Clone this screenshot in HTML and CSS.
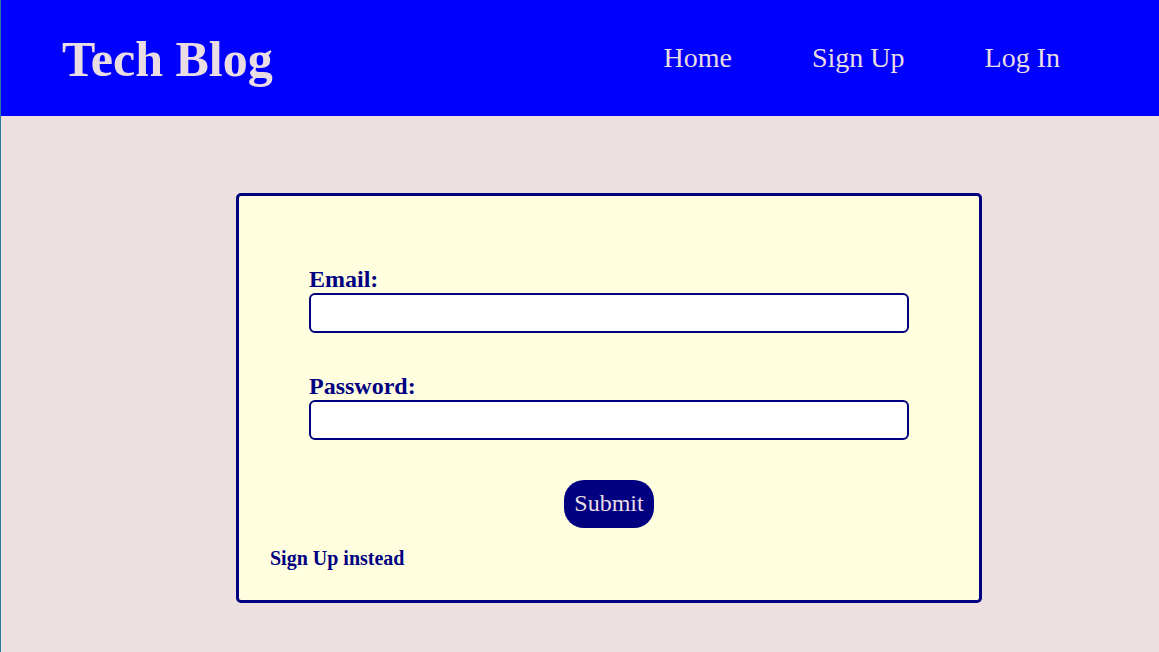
FILE: index.html
```html
<!DOCTYPE html>
<html>
<head>
<meta charset="utf-8">
<title>Tech Blog</title>
<link rel="stylesheet" href="styles.css">
</head>
<body>
<header class="site-header">
  <h1 class="brand">Tech Blog</h1>
  <nav class="nav">
    <a class="nav-link" href="#">Home</a>
    <a class="nav-link" href="#">Sign Up</a>
    <a class="nav-link" href="#">Log In</a>
  </nav>
</header>
<main class="main">
  <section class="card">
    <form class="login-form">
      <div class="field">
        <label class="field-label" for="email">Email:</label>
        <input class="field-input" id="email" type="email">
      </div>
      <div class="field field-second">
        <label class="field-label" for="password">Password:</label>
        <input class="field-input" id="password" type="password">
      </div>
      <div class="actions">
        <button class="submit" type="button">Submit</button>
      </div>
    </form>
    <a class="alt-link" href="#">Sign Up instead</a>
  </section>
</main>
</body>
</html>
```
FILE: styles.css
```css
html, body {
  margin: 0;
  padding: 0;
}
body {
  background: #ece0e0;
  font-family: "Liberation Serif", "Times New Roman", serif;
  border-left: 1px solid #2a7b94;
  min-height: 652px;
  box-sizing: border-box;
}
.site-header {
  background: #0000ff;
  height: 116px;
  display: flex;
  align-items: center;
  justify-content: space-between;
  padding: 0 99px 0 61px;
  box-sizing: border-box;
}
.brand {
  margin: 0;
  font-size: 50px;
  font-weight: bold;
  color: #e9dde3;
  padding-top: 1px;
}
.nav {
  display: flex;
  gap: 80px;
  padding-bottom: 1px;
}
.nav-link {
  color: #e9dde3;
  font-size: 28px;
  text-decoration: none;
}
.main {
  padding-top: 77px;
}
.card {
  margin-left: 235px;
  width: 746px;
  height: 410px;
  box-sizing: border-box;
  border: 3px solid #000080;
  border-radius: 5px;
  background: #ffffe0;
  padding: 70px 0 0 0;
}
.login-form {
  padding: 0 70px;
}
.field {
  display: flex;
  flex-direction: column;
}
.field-second {
  margin-top: 40px;
}
.field-label {
  font-size: 24px;
  font-weight: bold;
  color: #000080;
  margin-bottom: 0;
}
.field-input {
  height: 40px;
  box-sizing: border-box;
  border: 2px solid #000080;
  border-radius: 6px;
  background: #fff;
  width: 600px;
  margin: 0;
}
.actions {
  display: flex;
  justify-content: center;
  margin-top: 40px;
}
.submit {
  background: #000080;
  color: #e9dde3;
  border: none;
  border-radius: 20px;
  font-family: "Liberation Serif", "Times New Roman", serif;
  font-size: 24px;
  padding: 10px 10px 11px;
  line-height: 27px;
}
.alt-link {
  display: inline-block;
  margin-top: 19px;
  margin-left: 31px;
  font-size: 20px;
  font-weight: bold;
  color: #000080;
  text-decoration: none;
}
```
